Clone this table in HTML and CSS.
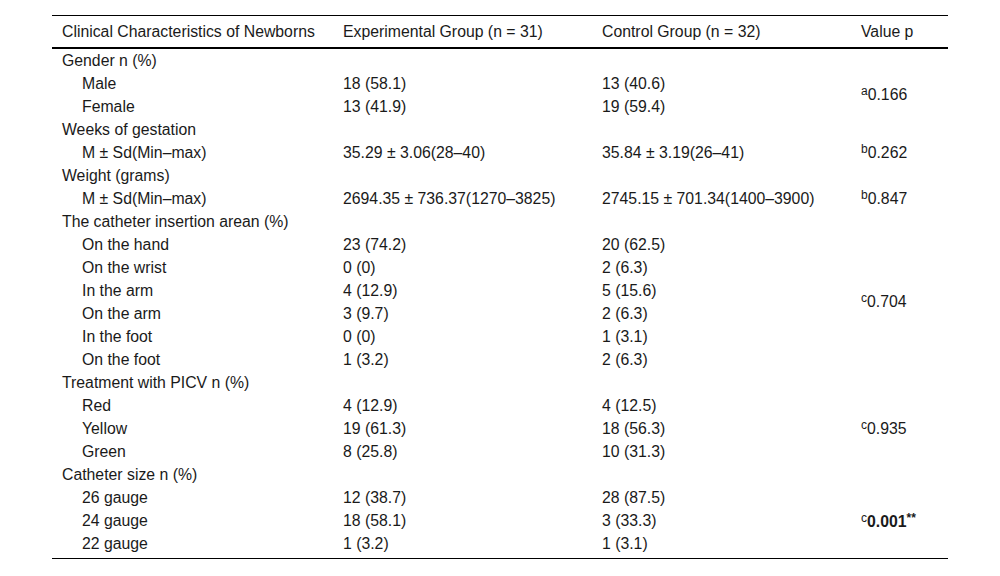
FILE: index.html
```html
<!DOCTYPE html>
<html>
<head>
<meta charset="utf-8">
<link rel="stylesheet" href="styles.css">
</head>
<body>
<table class="tbl">
<colgroup>
<col class="c1"><col class="c2"><col class="c3"><col class="c4">
</colgroup>
<thead>
<tr><th>Clinical Characteristics of Newborns</th><th>Experimental Group (n = 31)</th><th>Control Group (n = 32)</th><th>Value p</th></tr>
</thead>
<tbody>
<tr><td>Gender n (%)</td><td></td><td></td><td></td></tr>
<tr><td class="ind">Male</td><td>18 (58.1)</td><td>13 (40.6)</td><td rowspan="2"><sup>a</sup>0.166</td></tr>
<tr><td class="ind">Female</td><td>13 (41.9)</td><td>19 (59.4)</td></tr>
<tr><td>Weeks of gestation</td><td></td><td></td><td></td></tr>
<tr><td class="ind">M ± Sd(Min–max)</td><td>35.29 ± 3.06(28–40)</td><td>35.84 ± 3.19(26–41)</td><td><sup>b</sup>0.262</td></tr>
<tr><td>Weight (grams)</td><td></td><td></td><td></td></tr>
<tr><td class="ind">M ± Sd(Min–max)</td><td>2694.35 ± 736.37(1270–3825)</td><td>2745.15 ± 701.34(1400–3900)</td><td><sup>b</sup>0.847</td></tr>
<tr><td>The catheter insertion arean (%)</td><td></td><td></td><td></td></tr>
<tr><td class="ind">On the hand</td><td>23 (74.2)</td><td>20 (62.5)</td><td rowspan="6"><sup>c</sup>0.704</td></tr>
<tr><td class="ind">On the wrist</td><td>0 (0)</td><td>2 (6.3)</td></tr>
<tr><td class="ind">In the arm</td><td>4 (12.9)</td><td>5 (15.6)</td></tr>
<tr><td class="ind">On the arm</td><td>3 (9.7)</td><td>2 (6.3)</td></tr>
<tr><td class="ind">In the foot</td><td>0 (0)</td><td>1 (3.1)</td></tr>
<tr><td class="ind">On the foot</td><td>1 (3.2)</td><td>2 (6.3)</td></tr>
<tr><td>Treatment with PICV n (%)</td><td></td><td></td><td></td></tr>
<tr><td class="ind">Red</td><td>4 (12.9)</td><td>4 (12.5)</td><td rowspan="3"><sup>c</sup>0.935</td></tr>
<tr><td class="ind">Yellow</td><td>19 (61.3)</td><td>18 (56.3)</td></tr>
<tr><td class="ind">Green</td><td>8 (25.8)</td><td>10 (31.3)</td></tr>
<tr><td>Catheter size n (%)</td><td></td><td></td><td></td></tr>
<tr><td class="ind">26 gauge</td><td>12 (38.7)</td><td>28 (87.5)</td><td rowspan="3"><sup>c</sup><b>0.001<sup>**</sup></b></td></tr>
<tr><td class="ind">24 gauge</td><td>18 (58.1)</td><td>3 (33.3)</td></tr>
<tr><td class="ind">22 gauge</td><td>1 (3.2)</td><td>1 (3.1)</td></tr>
</tbody>
</table>
</body>
</html>
```
FILE: styles.css
```css
html, body {
  margin: 0;
  padding: 0;
  background: #fff;
}
body {
  padding: 15px 52px 0 52px;
  font-family: "Liberation Sans", Arial, sans-serif;
  font-size: 15.8px;
  color: #1a1a1a;
}
.tbl {
  width: 896px;
  border-collapse: collapse;
  table-layout: fixed;
  border-top: 1px solid #000;
  border-bottom: 1px solid #000;
}
.c1 { width: 281px; }
.c2 { width: 259px; }
.c3 { width: 259px; }
.c4 { width: 97px; }
.tbl th {
  font-weight: normal;
  text-align: left;
  padding: 1px 10px 0 10px;
  height: 30px;
  line-height: 18px;
  vertical-align: middle;
  border-bottom: 2px solid #000;
}
.tbl td {
  padding: 0 10px;
  height: 23px;
  line-height: 18px;
  vertical-align: middle;
  white-space: nowrap;
}
.tbl tbody tr:last-child td {
  padding-bottom: 3px;
}
.tbl td.ind {
  padding-left: 30px;
}
sup {
  font-size: 12px;
  line-height: 0;
  vertical-align: 5px;
}
```
